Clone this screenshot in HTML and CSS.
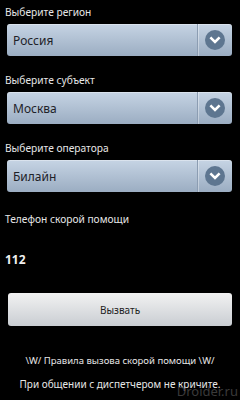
FILE: index.html
```html
<!DOCTYPE html>
<html>
<head>
<meta charset="utf-8">
<link rel="stylesheet" href="styles.css">
</head>
<body>
<div class="screen">
  <div class="label first">Выберите регион</div>
  <div class="spinner">
    <span class="value">Россия</span>
    <span class="arrow"><svg width="20" height="20" viewBox="0 0 20 20"><circle cx="10" cy="10" r="10" fill="#5e7690"/><path d="M6.3 8.3 L10 12 L13.7 8.3" fill="none" stroke="#fff" stroke-width="2.6" stroke-linecap="square"/></svg></span>
  </div>
  <div class="label">Выберите субъект</div>
  <div class="spinner">
    <span class="value">Москва</span>
    <span class="arrow"><svg width="20" height="20" viewBox="0 0 20 20"><circle cx="10" cy="10" r="10" fill="#5e7690"/><path d="M6.3 8.3 L10 12 L13.7 8.3" fill="none" stroke="#fff" stroke-width="2.6" stroke-linecap="square"/></svg></span>
  </div>
  <div class="label">Выберите оператора</div>
  <div class="spinner">
    <span class="value">Билайн</span>
    <span class="arrow"><svg width="20" height="20" viewBox="0 0 20 20"><circle cx="10" cy="10" r="10" fill="#5e7690"/><path d="M6.3 8.3 L10 12 L13.7 8.3" fill="none" stroke="#fff" stroke-width="2.6" stroke-linecap="square"/></svg></span>
  </div>
  <div class="label phone">Телефон скорой помощи</div>
  <div class="number">112</div>
  <div class="button">Вызвать</div>
  <div class="rules">\W/ Правила вызова скорой помощи \W/</div>
  <div class="note">При общении с диспетчером не кричите.</div>
  <div class="watermark">Droider.ru</div>
</div>
</body>
</html>
```
FILE: styles.css
```css
html, body {
  margin: 0;
  padding: 0;
  background: #000;
}
.screen {
  position: relative;
  width: 240px;
  height: 400px;
  overflow: hidden;
  font-family: "Noto Sans", "Open Sans", sans-serif;
  color: #e6e6e6;
  padding-top: 4px;
  box-sizing: border-box;
}
.label {
  font-size: 10.2px;
  line-height: 16px;
  padding-left: 5px;
  margin-top: 16px;
  margin-bottom: 4px;
}
.label.first {
  margin-top: 0;
}
.spinner {
  margin: 0 8px 0 7px;
  height: 32px;
  box-sizing: border-box;
  border-radius: 3px;
  background: linear-gradient(#c6d4e4, #9badc2);
  display: flex;
  align-items: center;
  box-shadow: inset 0 1px 0 rgba(255,255,255,0.35);
}
.value {
  flex: 1;
  padding-left: 6px;
  font-size: 12px;
  color: #1e2228;
}
.arrow {
  width: 34px;
  height: 100%;
  display: flex;
  align-items: center;
  justify-content: center;
  border-left: 1px solid #8c9db2;
  box-shadow: inset 1px 0 0 rgba(255,255,255,0.35);
}
.arrow svg {
  display: block;
  margin-left: -1px;
}
.label.phone {
  margin-top: 19px;
}
.number {
  font-size: 12px;
  font-weight: bold;
  line-height: 16px;
  padding-left: 5px;
  margin-top: 25px;
  color: #f0f0f0;
}
.button {
  margin: 25px 8px 0 8px;
  height: 33px;
  border-radius: 3px;
  background: linear-gradient(#f2f2f2, #c9cdd2);
  display: flex;
  align-items: center;
  justify-content: center;
  font-size: 10px;
  color: #222;
}
.rules {
  text-align: center;
  font-size: 9.5px;
  line-height: 14px;
  margin-top: 28px;
}
.note {
  text-align: center;
  font-size: 10px;
  line-height: 14px;
  margin-top: 9px;
}
.watermark {
  position: absolute;
  right: 2px;
  bottom: 2px;
  font-size: 13px;
  color: #3a3a3a;
  line-height: 13px;
}
```
